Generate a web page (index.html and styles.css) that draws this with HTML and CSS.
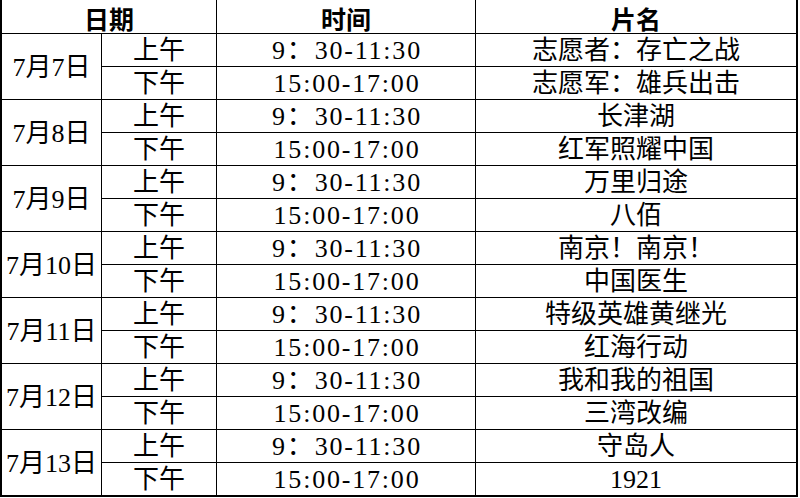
FILE: index.html
```html
<!DOCTYPE html>
<html lang="zh-CN">
<head>
<meta charset="utf-8">
<link rel="stylesheet" href="styles.css">
</head>
<body>
<div class="sheet">
  <div class="cell head span2">日期</div>
  <div class="cell head">时间</div>
  <div class="cell head last">片名</div>

  <div class="cell date">7月7日</div>
  <div class="cell">上午</div><div class="cell time">9：30-11:30</div><div class="cell last">志愿者：存亡之战</div>
  <div class="cell">下午</div><div class="cell time">15:00-17:00</div><div class="cell last">志愿军：雄兵出击</div>

  <div class="cell date">7月8日</div>
  <div class="cell">上午</div><div class="cell time">9：30-11:30</div><div class="cell last">长津湖</div>
  <div class="cell">下午</div><div class="cell time">15:00-17:00</div><div class="cell last">红军照耀中国</div>

  <div class="cell date">7月9日</div>
  <div class="cell">上午</div><div class="cell time">9：30-11:30</div><div class="cell last">万里归途</div>
  <div class="cell">下午</div><div class="cell time">15:00-17:00</div><div class="cell last">八佰</div>

  <div class="cell date">7月10日</div>
  <div class="cell">上午</div><div class="cell time">9：30-11:30</div><div class="cell last">南京！南京！</div>
  <div class="cell">下午</div><div class="cell time">15:00-17:00</div><div class="cell last">中国医生</div>

  <div class="cell date">7月11日</div>
  <div class="cell">上午</div><div class="cell time">9：30-11:30</div><div class="cell last">特级英雄黄继光</div>
  <div class="cell">下午</div><div class="cell time">15:00-17:00</div><div class="cell last">红海行动</div>

  <div class="cell date">7月12日</div>
  <div class="cell">上午</div><div class="cell time">9：30-11:30</div><div class="cell last">我和我的祖国</div>
  <div class="cell">下午</div><div class="cell time">15:00-17:00</div><div class="cell last">三湾改编</div>

  <div class="cell date">7月13日</div>
  <div class="cell">上午</div><div class="cell time">9：30-11:30</div><div class="cell last">守岛人</div>
  <div class="cell">下午</div><div class="cell time">15:00-17:00</div><div class="cell last">1921</div>
</div>
</body>
</html>
```

FILE: styles.css
```css
html, body {
  margin: 0;
  padding: 0;
  background: #ffffff;
}

.sheet {
  display: grid;
  grid-template-columns: 100px 115px 259px 320px;
  grid-template-rows: 34px;
  grid-auto-rows: 33px;
  width: 794px;
  border-left: 2px solid #000;
  border-right: 2px solid #000;
  border-bottom: 1px solid #000;
  font-family: "Liberation Serif", "Noto Sans CJK SC", serif;
  font-size: 26px;
  color: #000;
}

.cell {
  display: flex;
  align-items: center;
  justify-content: center;
  box-sizing: border-box;
  border-right: 1px solid #000;
  border-bottom: 1px solid #000;
  white-space: nowrap;
  line-height: 1;
  padding-top: 2px;
}

.cell.last {
  border-right: none;
}

.time {
  letter-spacing: 1.8px;
  padding-left: 2px;
}

.head {
  font-family: "Noto Sans CJK SC", sans-serif;
  font-weight: bold;
  font-size: 25px;
  padding-top: 3px;
}

.span2 {
  grid-column: span 2;
}

.date {
  grid-row: span 2;
}
```
